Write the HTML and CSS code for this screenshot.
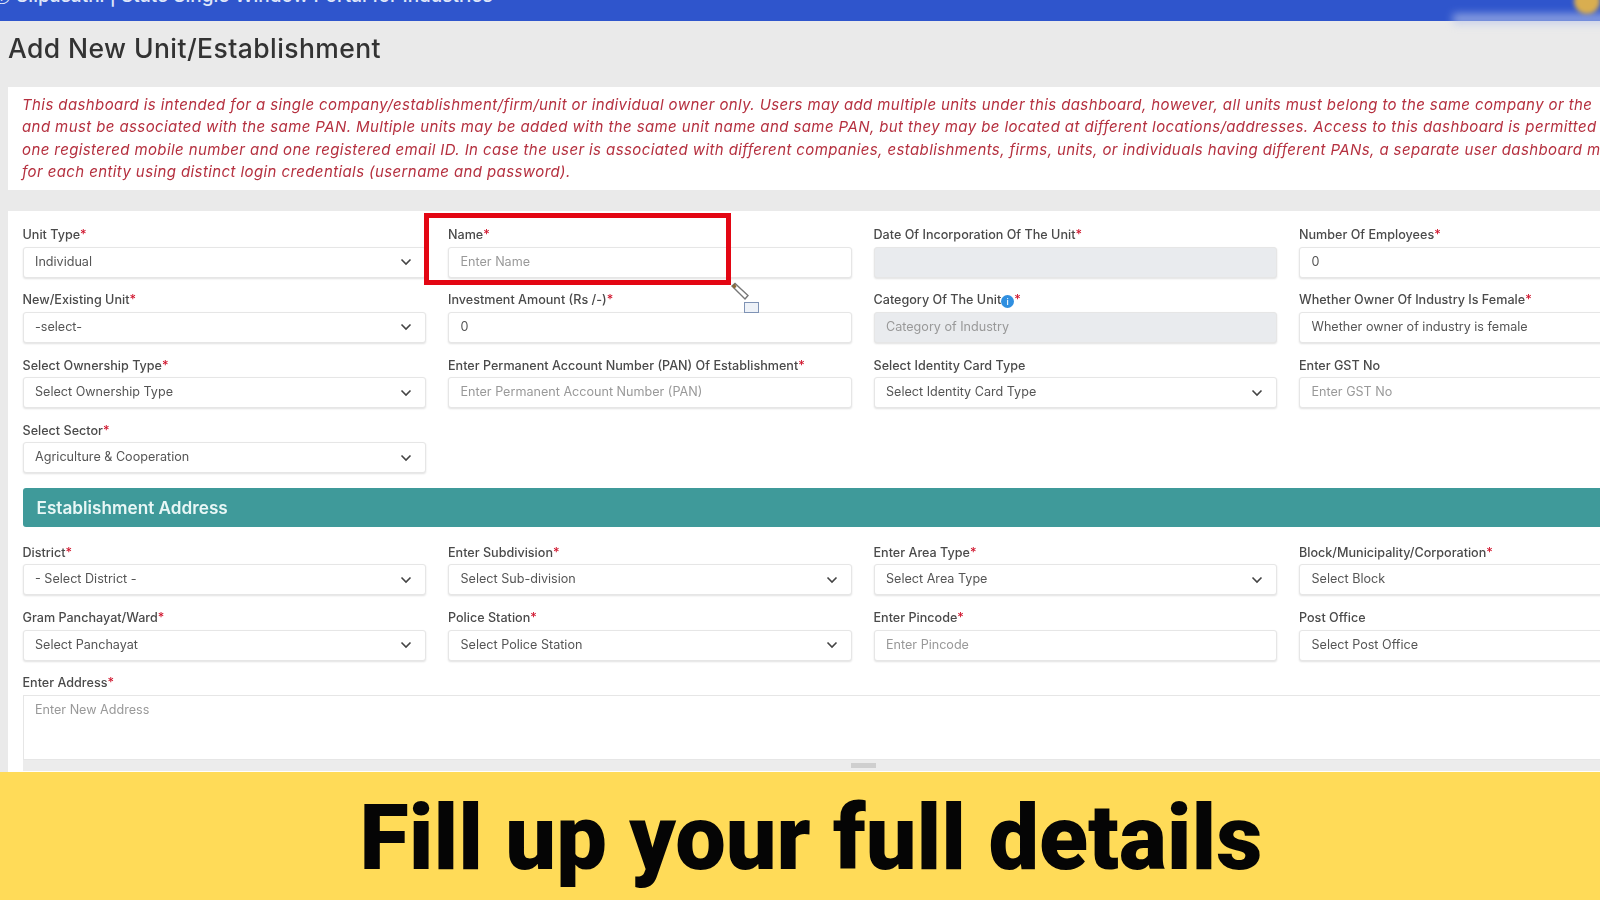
FILE: index.html
```html
<!DOCTYPE html>
<html lang="en">
<head>
    <meta charset="UTF-8">
    <title>Add New Unit/Establishment</title>
    <link rel="stylesheet" href="styles.css">
</head>
<body>
    <div class="page">
        <header class="topbar">
            <span class="topbar-title">&#9432; Silpasathi | State Single Window Portal for Industries</span>
        </header>
        <div class="topbar-smudge"></div>
        <div class="topbar-avatar"></div>

        <main class="content">
            <h1 class="page-title">Add New Unit/Establishment</h1>

            <div class="notice">
                <p>This dashboard is intended for a single company/establishment/firm/unit or individual owner only. Users may add multiple units under this dashboard, however, all units must belong to the same company or the</p>
                <p>and must be associated with the same PAN. Multiple units may be added with the same unit name and same PAN, but they may be located at different locations/addresses. Access to this dashboard is permitted</p>
                <p>one registered mobile number and one registered email ID. In case the user is associated with different companies, establishments, firms, units, or individuals having different PANs, a separate user dashboard must</p>
                <p>for each entity using distinct login credentials (username and password).</p>
            </div>

            <form class="panel">
                <div class="field-grid">
                    <div class="field">
                        <label>Unit Type<span class="req">*</span></label>
                        <select class="control"><option>Individual</option></select>
                    </div>
                    <div class="field">
                        <label>Name<span class="req">*</span></label>
                        <input class="control" type="text" placeholder="Enter Name">
                    </div>
                    <div class="field">
                        <label>Date Of Incorporation Of The Unit<span class="req">*</span></label>
                        <input class="control" type="text" disabled>
                    </div>
                    <div class="field">
                        <label>Number Of Employees<span class="req">*</span></label>
                        <input class="control" type="text" value="0">
                    </div>

                    <div class="field">
                        <label>New/Existing Unit<span class="req">*</span></label>
                        <select class="control"><option>-select-</option></select>
                    </div>
                    <div class="field">
                        <label>Investment Amount (Rs /-)<span class="req">*</span></label>
                        <input class="control" type="text" value="0">
                    </div>
                    <div class="field">
                        <label>Category Of The Unit<span class="info">i</span><span class="req">*</span></label>
                        <input class="control" type="text" placeholder="Category of Industry" disabled>
                    </div>
                    <div class="field">
                        <label>Whether Owner Of Industry Is Female<span class="req">*</span></label>
                        <select class="control"><option>Whether owner of industry is female</option></select>
                    </div>

                    <div class="field">
                        <label>Select Ownership Type<span class="req">*</span></label>
                        <select class="control"><option>Select Ownership Type</option></select>
                    </div>
                    <div class="field">
                        <label>Enter Permanent Account Number (PAN) Of Establishment<span class="req">*</span></label>
                        <input class="control" type="text" placeholder="Enter Permanent Account Number (PAN)">
                    </div>
                    <div class="field">
                        <label>Select Identity Card Type</label>
                        <select class="control"><option>Select Identity Card Type</option></select>
                    </div>
                    <div class="field">
                        <label>Enter GST No</label>
                        <input class="control" type="text" placeholder="Enter GST No">
                    </div>

                    <div class="field">
                        <label>Select Sector<span class="req">*</span></label>
                        <select class="control"><option>Agriculture &amp; Cooperation</option></select>
                    </div>
                </div>

                <h2 class="section-bar">Establishment Address</h2>

                <div class="field-grid">
                    <div class="field">
                        <label>District<span class="req">*</span></label>
                        <select class="control"><option>- Select District -</option></select>
                    </div>
                    <div class="field">
                        <label>Enter Subdivision<span class="req">*</span></label>
                        <select class="control"><option>Select Sub-division</option></select>
                    </div>
                    <div class="field">
                        <label>Enter Area Type<span class="req">*</span></label>
                        <select class="control"><option>Select Area Type</option></select>
                    </div>
                    <div class="field">
                        <label>Block/Municipality/Corporation<span class="req">*</span></label>
                        <select class="control"><option>Select Block</option></select>
                    </div>

                    <div class="field">
                        <label>Gram Panchayat/Ward<span class="req">*</span></label>
                        <select class="control"><option>Select Panchayat</option></select>
                    </div>
                    <div class="field">
                        <label>Police Station<span class="req">*</span></label>
                        <select class="control"><option>Select Police Station</option></select>
                    </div>
                    <div class="field">
                        <label>Enter Pincode<span class="req">*</span></label>
                        <input class="control" type="text" placeholder="Enter Pincode">
                    </div>
                    <div class="field">
                        <label>Post Office</label>
                        <select class="control"><option>Select Post Office</option></select>
                    </div>
                </div>

                <div class="field field-wide">
                    <label>Enter Address<span class="req">*</span></label>
                    <textarea class="control address" placeholder="Enter New Address"></textarea>
                </div>
                <div class="scrollbar"><div class="scrollbar-thumb"></div></div>
            </form>
        </main>

        <footer class="caption">Fill up your full details</footer>

        <!-- Annotation over the Name field -->
        <div class="highlight-box"></div>
        <svg class="pen-cursor" width="34" height="34" viewBox="0 0 34 34">
            <path d="M3 4 L6 1.5 L19 13.5 L16 17 Z" fill="#fff" stroke="#777" stroke-width="1.4"/>
            <path d="M3 4 L6 1.5 L7.5 5 L5 6.5 Z" fill="#8a6a3a"/>
            <rect x="15.5" y="20.5" width="14" height="10" fill="#eef2f8" stroke="#7f93b5"/>
        </svg>
    </div>
</body>
</html>
```

FILE: styles.css
```css
/* General Styles */
* {
    box-sizing: border-box;
}

html, body {
    margin: 0;
    padding: 0;
}

body {
    font-family: 'Inter', 'Open Sans', sans-serif;
    color: #444;
}

.page {
    position: relative;
    width: 1600px;
    height: 900px;
    overflow: hidden;
    display: flex;
    flex-direction: column;
    background: #eaeaea;
}

/* Top bar */
.topbar {
    flex: none;
    height: 21px;
    background: #2f55cc;
    display: flex;
    align-items: flex-end;
    padding: 0 0 15px 0;
}

.topbar-title {
    margin-left: -8px;
    color: #dfe6fa;
    font-size: 19px;
    line-height: 20px;
    font-weight: 500;
    white-space: nowrap;
}

.topbar-smudge {
    position: absolute;
    left: 1453px;
    top: 14px;
    width: 160px;
    height: 10px;
    background: #b9c5ea;
    filter: blur(4px);
    opacity: 0.7;
}

.topbar-avatar {
    position: absolute;
    left: 1574px;
    top: -12px;
    width: 26px;
    height: 26px;
    border-radius: 50%;
    background: #d9ae50;
    filter: blur(2px);
}

/* Content */
.content {
    flex: none;
    height: 751px;
    padding-left: 8px;
    overflow: hidden;
    filter: blur(0.35px);
}

.page-title {
    margin: 0;
    height: 66px;
    line-height: 54px;
    font-size: 26.5px;
    font-weight: 500;
    letter-spacing: 0.42px;
    color: #333;
    white-space: nowrap;
}

.notice {
    height: 103px;
    background: #fff;
    padding: 7px 0 0 14px;
    color: #b5303f;
    font-size: 15px;
    font-style: italic;
    letter-spacing: 0.4px;
    line-height: 22.3px;
    white-space: nowrap;
    overflow: hidden;
}

.notice p {
    margin: 0;
}

.panel {
    margin-top: 21px;
    height: 561px;
    background: #fff;
    padding: 15px 0 0 14.5px;
}

.field-grid {
    display: grid;
    grid-template-columns: repeat(4, 403.5px);
    column-gap: 22px;
    row-gap: 13.8px;
}

.field label {
    display: block;
    height: 18px;
    margin-bottom: 2.5px;
    font-size: 12.6px;
    line-height: 18px;
    font-weight: 500;
    color: #4a4a4a;
    white-space: nowrap;
}

.req {
    color: #d0142c;
}

.info {
    display: inline-block;
    width: 13px;
    height: 13px;
    margin-left: 0;
    border-radius: 50%;
    background: #2f8fe0;
    color: #fff;
    font-size: 9px;
    line-height: 13px;
    text-align: center;
    vertical-align: -1px;
}

.control {
    display: block;
    width: 100%;
    height: 31px;
    padding: 0 11.5px 2px;
    border: 1px solid #e6e6e6;
    border-radius: 3px;
    box-shadow: 0 1px 2px rgba(0, 0, 0, 0.12);
    background-color: #fff;
    font-family: inherit;
    font-size: 12.6px;
    color: #555;
    outline: none;
}

.control::placeholder {
    color: #999;
    opacity: 1;
}

.control:disabled {
    background-color: #e9ebee;
}

select.control {
    -webkit-appearance: none;
    appearance: none;
    background-image: url("data:image/svg+xml,%3Csvg xmlns='http://www.w3.org/2000/svg' width='12' height='8' viewBox='0 0 12 8'%3E%3Cpath d='M1.5 1.5 L6 6 L10.5 1.5' fill='none' stroke='%23444' stroke-width='1.6'/%3E%3C/svg%3E");
    background-repeat: no-repeat;
    background-position: right 13px center;
}

.section-bar {
    margin: 14.5px 0 17px 0;
    height: 39px;
    padding-left: 14px;
    border-radius: 3px 0 0 3px;
    background: #3f9a9a;
    color: #e8f7f6;
    font-size: 17.2px;
    font-weight: 600;
    line-height: 39px;
}

.field-wide {
    margin-top: 13.8px;
}

.address {
    height: 65px;
    padding-top: 6px;
    resize: none;
    border-radius: 0;
    border-right: none;
    box-shadow: none;
}

.scrollbar {
    height: 11px;
    background: #ececec;
    padding: 3px 0 0 828px;
}

.scrollbar-thumb {
    width: 25px;
    height: 5px;
    background: #cfcfcf;
}

/* Caption strip */
.caption {
    flex: none;
    height: 128px;
    padding-left: 22px;
    background: #ffdb58;
    color: #050505;
    font-family: 'Roboto', sans-serif;
    font-size: 90px;
    font-weight: 900;
    line-height: 134px;
    text-align: center;
    white-space: nowrap;
    overflow: hidden;
}

/* Annotation */
.highlight-box {
    position: absolute;
    left: 424px;
    top: 213px;
    width: 307px;
    height: 72px;
    border: 5px solid #e30613;
}

.pen-cursor {
    position: absolute;
    left: 729px;
    top: 282px;
}
```
